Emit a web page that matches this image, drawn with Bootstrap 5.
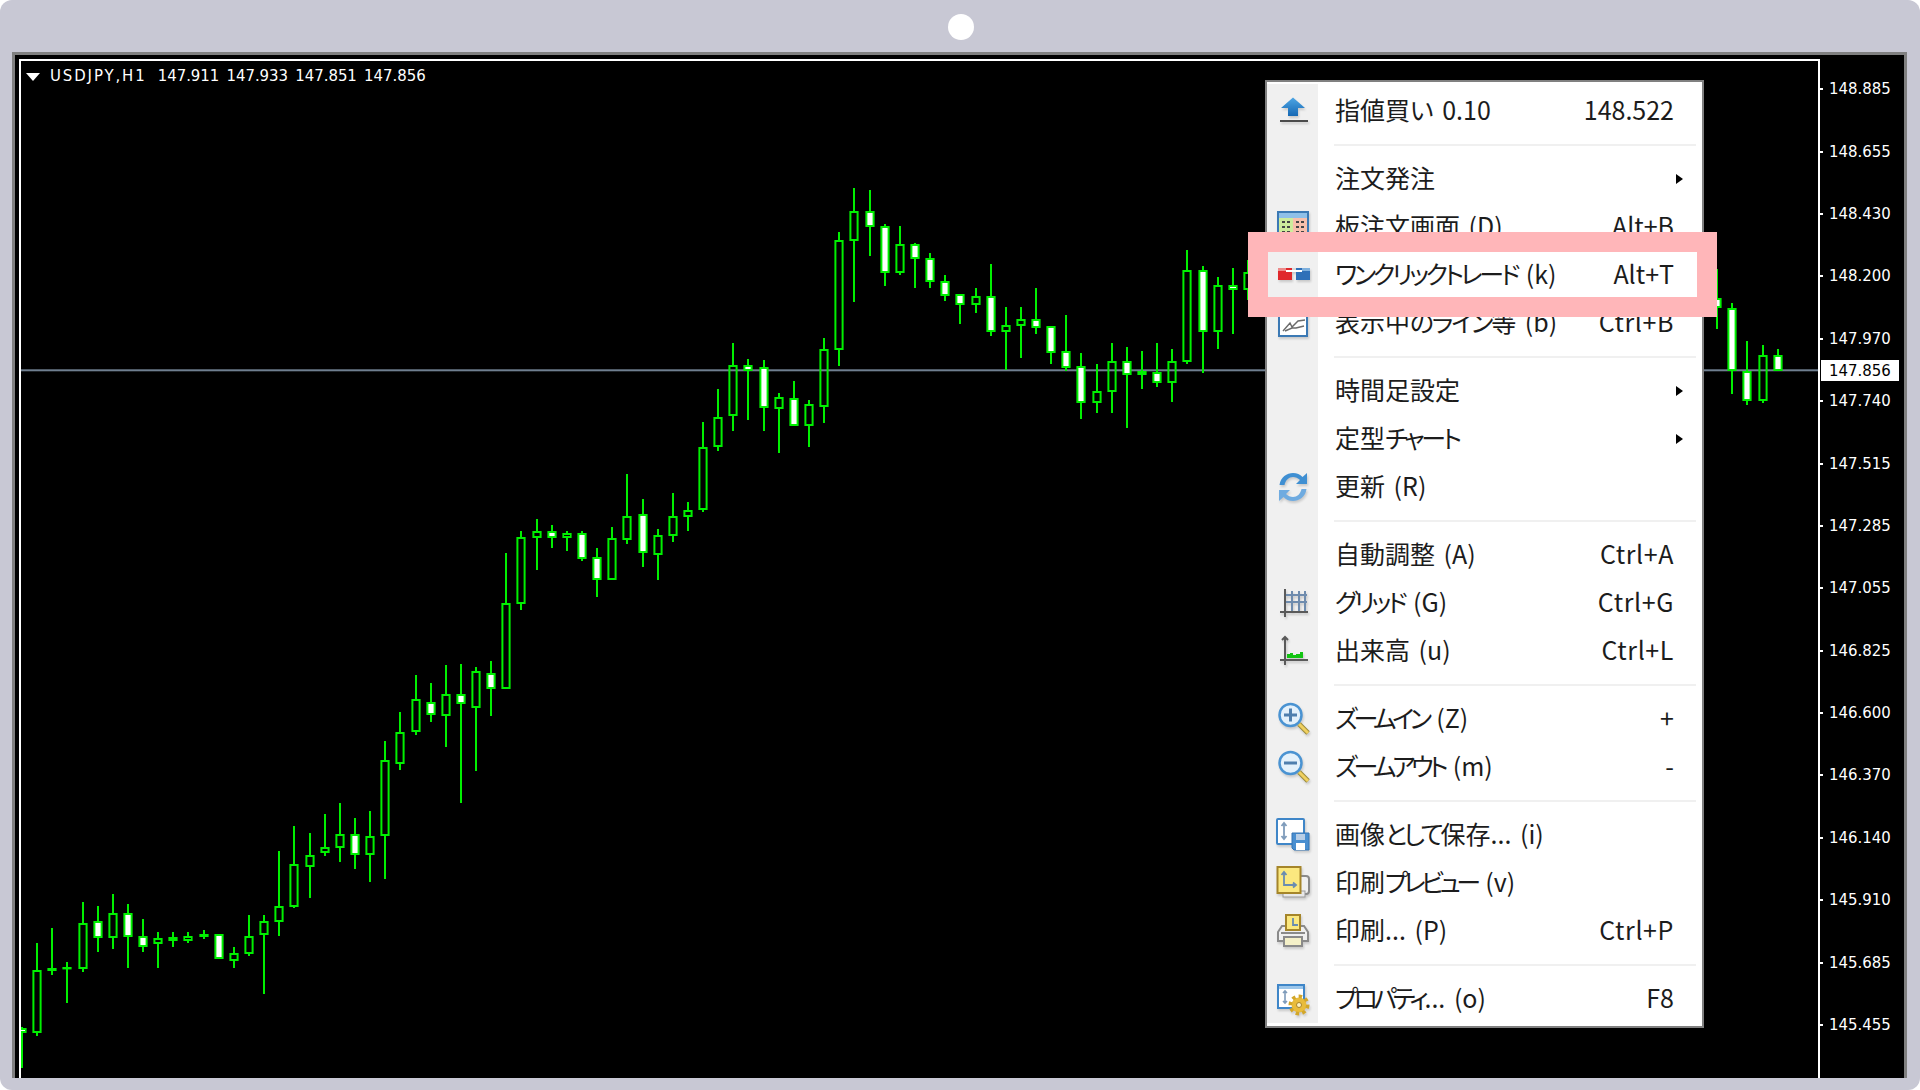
<!DOCTYPE html>
<html lang="ja">
  <head>
    <meta charset="UTF-8" />
    <title>USDJPY,H1 チャート メニュー</title>
    <link
      href="https://cdn.jsdelivr.net/npm/bootstrap@5.3.0/dist/css/bootstrap.min.css"
      rel="stylesheet"
    />
    <style>
      body {
        margin: 0;
        background-color: #ffffff;
        overflow: hidden;
      }

      .app-frame {
        width: 1920px;
        height: 1090px;
        padding: 0 13px 12px 12px;
        background-color: #c8c8d4;
        border-radius: 12px;
        overflow: hidden;
      }

      .top-bar {
        height: 52px;
        padding-top: 2px;
        flex: none;
      }

      .cam-dot {
        width: 26px;
        height: 26px;
        background-color: #ffffff;
        margin-left: 2px;
      }

      .mt-window {
        background-color: #000000;
        border: 3px solid #808080;
        border-bottom: 0;
        min-height: 0;
      }

      .plot-area {
        margin: 4px 0 0 4px;
        border: 2px solid #ffffff;
        border-bottom: 0;
        width: 1801px;
        flex: none;
      }

      .plot-area svg {
        display: block;
      }

      .chart-legend {
        top: 6px;
        left: 5px;
        color: #ffffff;
        font: 16.6px/18px "DejaVu Sans Condensed", "Liberation Sans", sans-serif;
        white-space: pre;
      }

      .legend-tri {
        width: 0;
        height: 0;
        border-left: 7px solid transparent;
        border-right: 7px solid transparent;
        border-top: 8px solid #ffffff;
        margin: 1px 10px 0 0;
      }

      .legend-sym {
        letter-spacing: 1.9px;
        margin-right: 11px;
      }

      .legend-ohlc {
        word-spacing: 2.3px;
      }

      .price-axis {
        width: 84px;
        padding-top: 3px;
        color: #ffffff;
        font: 16.6px/18px "DejaVu Sans Condensed", "Liberation Sans", sans-serif;
      }

      .axis-label {
        height: 62.4px;
        flex: none;
      }

      .axis-tick {
        width: 3px;
        height: 2px;
        background-color: #ffffff;
        margin-right: 6px;
      }

      .axis-now {
        left: 1px;
        top: 305px;
        width: 78px;
        height: 21px;
        padding-left: 8px;
        background-color: #ffffff;
        color: #000000;
      }

      .ctx-menu {
        left: 1265px;
        top: 80px;
        width: 439px;
        padding: 0;
        margin: 0;
        border: 2px solid #808080;
        border-radius: 0;
        background-color: #ffffff;
      }

      .ctx-inner {
        margin: 2px 0 3px;
        padding-top: 2.7px;
        background: linear-gradient(to right, #f0f0f0 51px, #ffffff 51px);
      }

      .ctx-row {
        height: 48px;
        padding: 0;
        color: #1c1c1c;
        font: 25px/30px "Noto Sans CJK JP", sans-serif;
        font-feature-settings: "palt";
        word-spacing: 3px;
      }

      .ctx-ico {
        width: 51px;
        flex: none;
        filter: drop-shadow(1px 2px 1px rgba(0, 0, 0, 0.16));
      }

      .ctx-ico svg {
        display: block;
        margin: 0 auto;
      }

      .ctx-label {
        padding: 0 0 4px 17px;
      }

      /* Meiryo UI sets its kana narrow, Noto does not */
      .kana {
        letter-spacing: -3.3px;
      }

      .kana-tight {
        letter-spacing: -4.4px;
      }

      .kana-soft {
        letter-spacing: -2.2px;
      }

      .ctx-key {
        margin-left: auto;
        padding: 0 2px 4px 0;
      }

      .key-ctrl {
        letter-spacing: 0.6px;
      }

      .ctx-end {
        width: 26px;
        flex: none;
      }

      .sub-arrow {
        display: block;
        width: 0;
        height: 0;
        margin-left: auto;
        margin-right: 19px;
        border-left: 7px solid #000000;
        border-top: 5px solid transparent;
        border-bottom: 5px solid transparent;
      }

      .ctx-menu hr {
        margin: 9px 6px 9px 67px;
        border: 0;
        border-top: 2px solid #f0f0f0;
        opacity: 1;
      }

      .pick-box {
        left: 1248px;
        top: 232px;
        width: 469px;
        height: 85px;
        border: 20px solid #ffb6b9;
        z-index: 1010;
        pointer-events: none;
      }
    </style>
  </head>
  <body>
    <div class="app-frame position-relative d-flex flex-column">
      <div class="top-bar d-flex justify-content-center align-items-center">
        <span class="cam-dot rounded-circle"></span>
      </div>

      <div class="mt-window d-flex flex-grow-1 overflow-hidden">
        <div class="plot-area position-relative">
          <svg id="chart" width="1797" height="1017" viewBox="21 61 1797 1017"></svg>
          <div class="chart-legend position-absolute d-flex align-items-center">
            <span class="legend-tri"></span><span class="legend-sym">USDJPY,H1</span><span class="legend-ohlc">147.911 147.933 147.851 147.856</span>
          </div>
        </div>
        <div class="price-axis position-relative d-flex flex-column" id="axis">
          <div class="axis-now position-absolute d-flex align-items-center">147.856</div>
        </div>
      </div>

      <!-- Right click menu -->
      <div class="dropdown-menu show ctx-menu position-absolute">
        <div class="ctx-inner">
          <div class="dropdown-item d-flex align-items-center ctx-row">
            <span class="ctx-ico">
              <svg width="34" height="34" viewBox="0 0 34 34">
                <defs>
                  <linearGradient id="blueFill" x1="0" y1="0" x2="0" y2="1">
                    <stop offset="0" stop-color="#4ea6e4" />
                    <stop offset="1" stop-color="#1668b4" />
                  </linearGradient>
                </defs>
                <path d="M17 3.500 29 14h-7v8h-10v-8H5z" fill="url(#blueFill)" />
                <rect x="4" y="26" width="28" height="2" fill="#4b4b4b" />
              </svg>
            </span>
            <span class="ctx-label">指値買い 0.10</span>
            <span class="ctx-key">148.522</span>
            <span class="ctx-end"></span>
          </div>
          <hr />
          <div class="dropdown-item d-flex align-items-center ctx-row">
            <span class="ctx-ico"></span>
            <span class="ctx-label">注文発注</span>
            <span class="ctx-end ms-auto"><i class="sub-arrow"></i></span>
          </div>
          <div class="dropdown-item d-flex align-items-center ctx-row">
            <span class="ctx-ico">
              <svg width="34" height="34" viewBox="0 0 34 34">
                <rect x="2" y="2" width="30" height="30" fill="#ffffff" stroke="#3b79b4" stroke-width="2" />
                <rect x="3" y="3" width="28" height="5" fill="#8fc0e8" />
                <rect x="3" y="8" width="14" height="23" fill="#cdec9c" />
                <rect x="17" y="8" width="14" height="23" fill="#f8c0ac" />
                <path d="M6 12h3M11 12h3M20 12h3M25 12h3M6 17h3M11 17h3M20 17h3M25 17h3M6 22h3M11 22h3M20 22h3M25 22h3M6 27h3M11 27h3M20 27h3M25 27h3" stroke="#444444" stroke-width="2" />
              </svg>
            </span>
            <span class="ctx-label">板注文画面 (D)</span>
            <span class="ctx-key">Alt+B</span>
            <span class="ctx-end"></span>
          </div>
          <div class="dropdown-item d-flex align-items-center ctx-row">
            <span class="ctx-ico">
              <svg width="34" height="34" viewBox="0 0 34 34">
                <rect x="2" y="10" width="14" height="12" fill="#e0282c" />
                <rect x="2" y="10" width="8" height="3" fill="#ec8a8a" />
                <rect x="20" y="10" width="14" height="12" fill="#2f70b8" />
                <rect x="26" y="10" width="8" height="3" fill="#7fb0dd" />
                <rect x="10" y="12" width="16" height="2" fill="#ffffff" />
                <rect x="16" y="10" width="4" height="2" fill="#d8d8d8" />
              </svg>
            </span>
            <span class="ctx-label"><span class="kana">ワンクリックトレード</span> (k)</span>
            <span class="ctx-key">Alt+T</span>
            <span class="ctx-end"></span>
          </div>
          <div class="dropdown-item d-flex align-items-center ctx-row">
            <span class="ctx-ico">
              <svg width="34" height="34" viewBox="0 0 34 34">
                <rect x="3" y="3" width="28" height="27" fill="#ffffff" stroke="#3b79b4" stroke-width="2" />
                <path d="M7 25 14 17l2 4 6-6 7-1M9 25l7-3 4 0 8-2" fill="none" stroke="#6b6b6b" stroke-width="1.400" />
              </svg>
            </span>
            <span class="ctx-label">表示中<span class="kana-soft">のライン</span>等 (b)</span>
            <span class="ctx-key key-ctrl">Ctrl+B</span>
            <span class="ctx-end"></span>
          </div>
          <hr />
          <div class="dropdown-item d-flex align-items-center ctx-row">
            <span class="ctx-ico"></span>
            <span class="ctx-label">時間足設定</span>
            <span class="ctx-end ms-auto"><i class="sub-arrow"></i></span>
          </div>
          <div class="dropdown-item d-flex align-items-center ctx-row">
            <span class="ctx-ico"></span>
            <span class="ctx-label">定型<span class="kana">チャート</span></span>
            <span class="ctx-end ms-auto"><i class="sub-arrow"></i></span>
          </div>
          <div class="dropdown-item d-flex align-items-center ctx-row">
            <span class="ctx-ico">
              <svg width="34" height="34" viewBox="0 0 34 34">
                <path d="M3.500 15C4.500 7 11 3 17 3c4 0 7 1.500 9.500 4L31 3v11H20l4-4C22 8 19.500 7 17 7c-4 0-7.500 3-8.500 8z" fill="#3f8fd2" />
                <path d="M30.500 19C29.500 27 23 31 17 31c-4 0-7-1.500-9.500-4L3 31V20h11l-4 4c2 2 4.500 3 7 3 4 0 7.500-3 8.500-8z" fill="#6fabe0" />
              </svg>
            </span>
            <span class="ctx-label">更新 (R)</span>
          </div>
          <hr />
          <div class="dropdown-item d-flex align-items-center ctx-row">
            <span class="ctx-ico"></span>
            <span class="ctx-label">自動調整 (A)</span>
            <span class="ctx-key key-ctrl">Ctrl+A</span>
            <span class="ctx-end"></span>
          </div>
          <div class="dropdown-item d-flex align-items-center ctx-row">
            <span class="ctx-ico">
              <svg width="34" height="34" viewBox="0 0 34 34">
                <path d="M16 5v20M23 5v20M29 5v20M10 9h21M10 16h21" stroke="#6f8cae" stroke-width="2" fill="none" />
                <path d="M9 3v28M4 26h28" stroke="#5a5a5a" stroke-width="2" fill="none" />
              </svg>
            </span>
            <span class="ctx-label"><span class="kana">グリッド</span> (G)</span>
            <span class="ctx-key key-ctrl">Ctrl+G</span>
            <span class="ctx-end"></span>
          </div>
          <div class="dropdown-item d-flex align-items-center ctx-row">
            <span class="ctx-ico">
              <svg width="34" height="34" viewBox="0 0 34 34">
                <path d="M11 24v-4h3v-1h3v2h3v-1h4v-2h3v6z" fill="#12c412" />
                <path d="M9 3v28M4 26h28M6 6l3-3 3 3" stroke="#5a5a5a" stroke-width="2" fill="none" />
              </svg>
            </span>
            <span class="ctx-label">出来高 (u)</span>
            <span class="ctx-key key-ctrl">Ctrl+L</span>
            <span class="ctx-end"></span>
          </div>
          <hr />
          <div class="dropdown-item d-flex align-items-center ctx-row">
            <span class="ctx-ico">
              <svg width="34" height="34" viewBox="0 0 34 34">
                <path d="M23 22l9 9" stroke="#9a8a3a" stroke-width="5" />
                <path d="M23 22l9 9" stroke="#f0d060" stroke-width="3" />
                <circle cx="14.500" cy="13" r="11" fill="#e4f1fb" stroke="#4a93d2" stroke-width="2.500" />
                <path d="M8 13h13M14.500 6.500v13" stroke="#4f7fae" stroke-width="3" />
              </svg>
            </span>
            <span class="ctx-label"><span class="kana-tight">ズームイン</span> (Z)</span>
            <span class="ctx-key">+</span>
            <span class="ctx-end"></span>
          </div>
          <div class="dropdown-item d-flex align-items-center ctx-row">
            <span class="ctx-ico">
              <svg width="34" height="34" viewBox="0 0 34 34">
                <path d="M23 22l9 9" stroke="#9a8a3a" stroke-width="5" />
                <path d="M23 22l9 9" stroke="#f0d060" stroke-width="3" />
                <circle cx="14.500" cy="13" r="11" fill="#e4f1fb" stroke="#4a93d2" stroke-width="2.500" />
                <path d="M8 13h13" stroke="#4f7fae" stroke-width="3" />
              </svg>
            </span>
            <span class="ctx-label"><span class="kana-tight">ズームアウト</span> (m)</span>
            <span class="ctx-key">-</span>
            <span class="ctx-end"></span>
          </div>
          <hr />
          <div class="dropdown-item d-flex align-items-center ctx-row">
            <span class="ctx-ico">
              <svg width="34" height="34" viewBox="0 0 34 34">
                <rect x="1" y="1" width="27" height="25" rx="1" fill="#ffffff" stroke="#3f86c8" stroke-width="2" />
                <path d="M8 5v16M5.500 8 8 5l2.500 3M5.500 18 8 21l2.500-3" stroke="#7f9cbb" stroke-width="1.800" fill="none" />
                <path d="M16 15h17v17H18l-2-2z" fill="#4a8fd0" stroke="#3474b4" />
                <rect x="20" y="16" width="9" height="6" fill="#b8cee6" />
                <rect x="20" y="25" width="9" height="7" fill="#ffffff" />
              </svg>
            </span>
            <span class="ctx-label">画像<span class="kana">として</span>保存... (i)</span>
          </div>
          <div class="dropdown-item d-flex align-items-center ctx-row">
            <span class="ctx-ico">
              <svg width="34" height="34" viewBox="0 0 34 34">
                <rect x="20" y="10" width="13" height="18" rx="3" fill="#f0f0f0" stroke="#8a8a8a" stroke-width="2" />
                <rect x="7" y="25" width="22" height="6" fill="#e8e8e8" stroke="#9a9a9a" />
                <rect x="1.500" y="1" width="23" height="26" fill="#fbe87f" stroke="#a5852a" stroke-width="2" />
                <path d="M8 6v13h12M5.500 9 8 6l2.500 3M17 16.500l3 2.500-3 2.500" stroke="#6a8cb0" stroke-width="1.800" fill="none" />
              </svg>
            </span>
            <span class="ctx-label">印刷<span class="kana-tight">プレビュー</span> (v)</span>
          </div>
          <div class="dropdown-item d-flex align-items-center ctx-row">
            <span class="ctx-ico">
              <svg width="34" height="34" viewBox="0 0 34 34">
                <path d="M6 12h22l4 6v9H2v-9z" fill="#efefef" stroke="#8a8a8a" stroke-width="2" />
                <rect x="10" y="1" width="14" height="15" fill="#fbe87f" stroke="#a5852a" stroke-width="2" />
                <path d="M17 4v7h5" stroke="#6a8cb0" stroke-width="1.800" fill="none" />
                <rect x="8" y="23" width="18" height="9" fill="#f4f0c8" stroke="#8a8a8a" stroke-width="2" />
                <rect x="5" y="18" width="24" height="2" fill="#8a8a8a" />
              </svg>
            </span>
            <span class="ctx-label">印刷... (P)</span>
            <span class="ctx-key key-ctrl">Ctrl+P</span>
            <span class="ctx-end"></span>
          </div>
          <hr />
          <div class="dropdown-item d-flex align-items-center ctx-row">
            <span class="ctx-ico">
              <svg width="34" height="34" viewBox="0 0 34 34">
                <rect x="2" y="3" width="26" height="23" fill="#ffffff" stroke="#3f86c8" stroke-width="2" />
                <rect x="3" y="4" width="24" height="3" fill="#9cc6ea" />
                <path d="M9 9v12M7 11l2-2 2 2M7 19l2 2 2-2" stroke="#7f9cbb" stroke-width="1.600" fill="none" />
                <circle cx="23" cy="23" r="7.500" fill="#e8bc3c" stroke="#d2a62a" stroke-width="6" stroke-dasharray="3 2.800" />
                <circle cx="23" cy="23" r="7" fill="#e8bc3c" />
                <circle cx="23" cy="23" r="2.500" fill="#fdf2c0" stroke="#a8842a" />
              </svg>
            </span>
            <span class="ctx-label"><span class="kana-tight">プロパティ</span>... (o)</span>
            <span class="ctx-key">F8</span>
            <span class="ctx-end"></span>
          </div>
        </div>
      </div>

      <!-- Highlight around the one click item -->
      <div class="pick-box position-absolute"></div>
    </div>

    <script src="https://cdn.jsdelivr.net/npm/bootstrap@5.3.0/dist/js/bootstrap.bundle.min.js"></script>
    <script>
      // Axis labels, top to bottom
      const prices = [
        "148.885", "148.655", "148.430", "148.200", "147.970", "147.740",
        "147.515", "147.285", "147.055", "146.825", "146.600", "146.370",
        "146.140", "145.910", "145.685", "145.455",
      ];
      const axis = document.getElementById("axis");
      prices.forEach((p) => {
        const row = document.createElement("div");
        row.className = "axis-label d-flex align-items-center";
        row.innerHTML = '<span class="axis-tick"></span><span>' + p + "</span>";
        axis.appendChild(row);
      });

      // One candle: [bar index, high, low, body top, body bottom, white body]
      const candles = [
        [0, 1027, 1068, 1028, 1033, 1], [1, 943, 1036, 970, 1033, 0],
        [2, 928, 975, 968, 971, 1], [3, 962, 1003, 967, 969, 1],
        [4, 902, 972, 923, 969, 0], [5, 906, 952, 921, 938, 1],
        [6, 894, 949, 913, 938, 0], [7, 904, 968, 913, 937, 1],
        [8, 919, 952, 936, 947, 1], [9, 932, 968, 938, 944, 0],
        [10, 932, 947, 937, 941, 1], [11, 932, 943, 936, 941, 0],
        [12, 930, 939, 934, 937, 1], [13, 934, 959, 934, 959, 1],
        [14, 947, 968, 953, 961, 0], [15, 915, 956, 936, 954, 0],
        [16, 915, 994, 921, 935, 0], [17, 851, 936, 906, 922, 0],
        [18, 826, 908, 864, 907, 0], [19, 833, 898, 855, 867, 0],
        [20, 814, 856, 847, 853, 0], [21, 803, 862, 834, 848, 0],
        [22, 818, 869, 834, 855, 1], [23, 811, 882, 836, 855, 0],
        [24, 741, 879, 760, 836, 0], [25, 712, 770, 732, 764, 0],
        [26, 675, 735, 699, 732, 0], [27, 683, 722, 702, 715, 1],
        [28, 665, 747, 694, 716, 0], [29, 664, 803, 694, 704, 1],
        [30, 667, 771, 671, 708, 0], [31, 661, 716, 673, 689, 1],
        [32, 553, 689, 603, 689, 0], [33, 531, 610, 537, 604, 0],
        [34, 519, 570, 531, 538, 0], [35, 525, 548, 531, 538, 1],
        [36, 531, 551, 533, 538, 0], [37, 531, 561, 533, 559, 1],
        [38, 548, 597, 557, 580, 1], [39, 527, 580, 538, 580, 0],
        [40, 474, 544, 516, 540, 0], [41, 499, 567, 514, 553, 1],
        [42, 529, 580, 535, 555, 0], [43, 493, 542, 516, 536, 0],
        [44, 502, 531, 510, 517, 0], [45, 422, 512, 447, 510, 0],
        [46, 389, 451, 417, 447, 0], [47, 343, 431, 365, 416, 0],
        [48, 359, 420, 365, 371, 1], [49, 360, 431, 367, 408, 1],
        [50, 393, 453, 397, 409, 0], [51, 381, 426, 398, 426, 1],
        [52, 400, 447, 404, 426, 0], [53, 338, 423, 349, 407, 0],
        [54, 232, 366, 240, 350, 0], [55, 188, 302, 211, 241, 0],
        [56, 190, 256, 211, 227, 1], [57, 224, 286, 226, 273, 1],
        [58, 226, 275, 244, 273, 0], [59, 243, 288, 244, 259, 1],
        [60, 253, 288, 258, 282, 1], [61, 275, 301, 281, 296, 1],
        [62, 294, 324, 294, 305, 1], [63, 288, 313, 296, 305, 0],
        [64, 264, 336, 296, 332, 1], [65, 307, 370, 325, 332, 0],
        [66, 307, 358, 319, 326, 0], [67, 288, 334, 319, 328, 1],
        [68, 326, 364, 326, 353, 1], [69, 315, 371, 351, 368, 1],
        [70, 353, 419, 366, 403, 1], [71, 364, 413, 391, 403, 0],
        [72, 343, 413, 361, 392, 0], [73, 347, 428, 361, 375, 1],
        [74, 351, 389, 371, 375, 1], [75, 343, 387, 372, 383, 1],
        [76, 349, 402, 361, 383, 0], [77, 250, 364, 270, 362, 0],
        [78, 266, 373, 270, 332, 1], [79, 277, 349, 285, 332, 0],
        [80, 268, 334, 285, 290, 1], [81, 260, 300, 272, 290, 0],
        [112, 269, 329, 298, 308, 1], [113, 303, 394, 308, 371, 1],
        [114, 341, 405, 371, 401, 1], [115, 345, 403, 355, 401, 0],
        [116, 349, 371, 355, 371, 1],
      ];

      // Build the chart: price line first, then the bars over it
      const GREEN = "#00f000";
      let svg = '<rect x="21" y="369.300" width="1797" height="2" fill="#6f7f90" />';
      candles.forEach(([i, high, low, top, bottom, white]) => {
        const x = Math.round(22 + i * 15.135);
        if (top > high) {
          svg += `<rect x="${x - 1}" y="${high}" width="2" height="${top - high}" fill="${GREEN}" />`;
        }
        if (low > bottom) {
          svg += `<rect x="${x - 1}" y="${bottom}" width="2" height="${low - bottom}" fill="${GREEN}" />`;
        }
        svg += `<rect x="${x - 3.6}" y="${top + 1}" width="7.2" height="${Math.max(bottom - top - 2, 0.4)}"
          fill="${white ? "#ffffff" : "none"}" stroke="${GREEN}" stroke-width="2" />`;
      });
      document.getElementById("chart").innerHTML = svg;
    </script>
  </body>
</html>
